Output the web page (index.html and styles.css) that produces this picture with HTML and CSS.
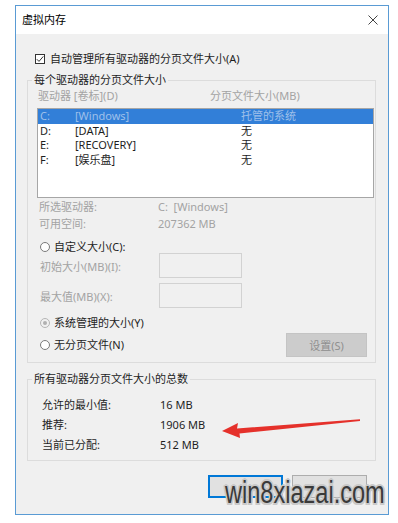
FILE: index.html
```html
<!DOCTYPE html>
<html lang="zh-CN">
<head>
    <meta charset="UTF-8">
    <meta name="viewport" content="width=device-width, initial-scale=1.0">
    <title>虚拟内存</title>
    <link rel="stylesheet" href="styles.css">
</head>
<body>
    <div class="window">
        <div class="titlebar">
            <span class="title">虚拟内存</span>
            <svg class="close" width="10" height="10" viewBox="0 0 10 10">
                <path d="M0.5 0.5 L9.5 9.5 M9.5 0.5 L0.5 9.5" stroke="#444" stroke-width="1" fill="none"/>
            </svg>
        </div>

        <div class="content">
            <div class="check-row">
                <span class="checkbox">
                    <svg width="8" height="8" viewBox="0 0 8 8">
                        <path d="M0.8 4.2 L3 6.4 L7.3 1.4" stroke="#333" stroke-width="1" fill="none"/>
                    </svg>
                </span>
                自动管理所有驱动器的分页文件大小(A)
            </div>

            <fieldset class="group">
                <legend>每个驱动器的分页文件大小</legend>

                <div class="list-head disabled">
                    <span class="head-drive">驱动器 [卷标](D)</span>
                    <span>分页文件大小(MB)</span>
                </div>

                <div class="listbox">
                    <div class="list-row selected">
                        <span class="col-letter">C:</span>
                        <span class="col-label">[Windows]</span>
                        <span>托管的系统</span>
                    </div>
                    <div class="list-row">
                        <span class="col-letter">D:</span>
                        <span class="col-label">[DATA]</span>
                        <span>无</span>
                    </div>
                    <div class="list-row">
                        <span class="col-letter">E:</span>
                        <span class="col-label">[RECOVERY]</span>
                        <span>无</span>
                    </div>
                    <div class="list-row">
                        <span class="col-letter">F:</span>
                        <span class="col-label">[娱乐盘]</span>
                        <span>无</span>
                    </div>
                </div>

                <div class="info-row disabled">
                    <span class="info-label">所选驱动器:</span>
                    <span>C:&nbsp;&nbsp;[Windows]</span>
                </div>
                <div class="info-row disabled">
                    <span class="info-label">可用空间:</span>
                    <span>207362 MB</span>
                </div>

                <div class="radio-row first">
                    <span class="radio"></span>自定义大小(C):
                </div>
                <div class="size-row disabled">
                    <span class="size-label">初始大小(MB)(I):</span>
                    <span class="textbox"></span>
                </div>
                <div class="size-row disabled">
                    <span class="size-label">最大值(MB)(X):</span>
                    <span class="textbox"></span>
                </div>
                <div class="radio-row system">
                    <span class="radio checked"></span>系统管理的大小(Y)
                </div>
                <div class="last-row">
                    <span class="radio-row"><span class="radio"></span>无分页文件(N)</span>
                    <button class="btn set" disabled>设置(S)</button>
                </div>
            </fieldset>

            <fieldset class="group totals">
                <legend>所有驱动器分页文件大小的总数</legend>
                <div class="total-row">
                    <span class="total-label">允许的最小值:</span>
                    <span>16 MB</span>
                </div>
                <div class="total-row">
                    <span class="total-label">推荐:</span>
                    <span>1906 MB</span>
                </div>
                <div class="total-row">
                    <span class="total-label">当前已分配:</span>
                    <span>512 MB</span>
                </div>
            </fieldset>

            <!-- button captions are hidden under the watermark in the shot -->
            <div class="actions">
                <button class="btn primary" aria-label="确定"></button>
                <button class="btn" aria-label="取消"></button>
            </div>
        </div>

        <!-- annotation arrow pointing at the recommended size -->
        <svg class="arrow" width="170" height="40" viewBox="0 0 170 40">
            <polygon points="22,21 38,13 37,18.5 160,9.2 160,11 39.5,23.5 40,28" fill="#e5312b"/>
        </svg>

        <div class="watermark">win8xiazai.com</div>
    </div>
</body>
</html>
```

FILE: styles.css
```css
* {
    margin: 0;
    padding: 0;
    box-sizing: border-box;
}

body {
    background: #fff;
    font-family: "Noto Sans", "Noto Sans CJK SC", sans-serif;
    font-size: 11px;
    color: #1e1e1e;
}

.window {
    position: relative;
    margin: 5px 0 0 15px;
    width: 374px;
    height: 510px;
    border: 1px solid #5a9bd4;
    display: flex;
    flex-direction: column;
    background: #f0f0f0;
}

.titlebar {
    height: 28px;
    background: #fff;
    display: flex;
    align-items: center;
    justify-content: space-between;
    padding: 0 10px 0 6px;
}

.title {
    color: #000;
    line-height: 14px;
}

.content {
    flex: 1;
    padding: 0 12px 0 11px;
}

.disabled {
    color: #a3a3a3;
}

/* checkbox */
.check-row {
    display: flex;
    align-items: center;
    height: 14px;
    line-height: 14px;
    margin: 18px 0 0 8px;
}

.checkbox {
    width: 10px;
    height: 10px;
    border: 1px solid #333;
    background: #fff;
    display: flex;
    align-items: center;
    justify-content: center;
    margin-right: 5px;
}

/* group boxes */
.group {
    border: 1px solid #dcdcdc;
    margin-top: 7px;
    padding: 0 0 5px 0;
}

.group legend {
    margin-left: 4px;
    padding: 0 2px;
    line-height: 14px;
}

.list-head {
    display: flex;
    height: 14px;
    line-height: 14px;
    margin-top: 2px;
    padding-left: 10px;
}

.head-drive {
    width: 172px;
}

.listbox {
    height: 90px;
    margin: 5px 1px 0 9px;
    border: 1px solid #a6a6a6;
    background: #fff;
}

.list-row {
    display: flex;
    height: 14.5px;
    line-height: 14.5px;
    padding-left: 2px;
}

.list-row.selected {
    background: #327fd8;
    color: #9fc0ea;
}

.col-letter {
    width: 35px;
}

.col-label {
    width: 166px;
}

.info-row {
    display: flex;
    height: 17px;
    line-height: 17px;
    padding-left: 11px;
}

.info-row:first-of-type {
    margin-top: 5px;
}

.info-label {
    width: 119px;
}

/* radios */
.radio-row {
    display: flex;
    align-items: center;
    padding-left: 12px;
    line-height: 14px;
}

.radio-row.first {
    margin-top: 8px;
    height: 13px;
}

.radio-row.system {
    margin-top: 8px;
    height: 14px;
}

.radio {
    width: 10px;
    height: 10px;
    border: 1px solid #7a7a7a;
    border-radius: 50%;
    background: #fff;
    margin-right: 4px;
    display: flex;
    align-items: center;
    justify-content: center;
}

.radio.checked {
    border-color: #b5b5b5;
    background: #f0f0f0;
}

.radio.checked::after {
    content: "";
    width: 4px;
    height: 4px;
    border-radius: 50%;
    background: #b0b0b0;
}

.size-row {
    display: flex;
    align-items: center;
    height: 25px;
    padding-left: 12px;
}

.size-row + .size-row {
    margin-top: 5px;
}

.size-label {
    width: 119px;
}

.textbox {
    width: 83px;
    height: 25px;
    border: 1px solid #d2d2d2;
    background: #f0f0f0;
}

.last-row {
    display: flex;
    align-items: center;
    justify-content: space-between;
    height: 24px;
    margin-top: 3px;
    padding-right: 8px;
}

.last-row .radio-row {
    padding-left: 12px;
}

/* buttons */
.btn {
    font-family: inherit;
    font-size: 11px;
    width: 75px;
    height: 23px;
    border: 1px solid #adadad;
    background: #e1e1e1;
    color: #1e1e1e;
}

.btn.set {
    width: 81px;
    height: 24px;
    background: #cccccc;
    border-color: #c4c4c4;
    color: #8f8f8f;
}

.btn.primary {
    border-color: #0078d7;
    box-shadow: inset 0 0 0 1px #0078d7;
}

.totals {
    margin-top: 9px;
}

.total-row {
    display: flex;
    height: 20px;
    line-height: 20px;
    padding-left: 14px;
}

.total-row:first-of-type {
    margin-top: 9px;
}

.total-label {
    width: 118px;
}

.actions {
    display: flex;
    justify-content: flex-end;
    gap: 9px;
    margin-top: 14px;
    padding-right: 9px;
}

/* overlays */
.arrow {
    position: absolute;
    left: 184px;
    top: 404px;
}

.watermark {
    position: absolute;
    left: 209px;
    top: 471px;
    font-family: "Liberation Sans", sans-serif;
    font-size: 31px;
    line-height: 31px;
    color: #3a3a3a;
    transform: scaleX(0.76);
    transform-origin: left top;
    text-shadow:
        2px 0 0 #c9c9c9, -2px 0 0 #c9c9c9,
        0 2px 0 #c9c9c9, 0 -2px 0 #c9c9c9,
        1.5px 1.5px 0 #c9c9c9, -1.5px -1.5px 0 #c9c9c9,
        1.5px -1.5px 0 #c9c9c9, -1.5px 1.5px 0 #c9c9c9;
    white-space: nowrap;
}
```
